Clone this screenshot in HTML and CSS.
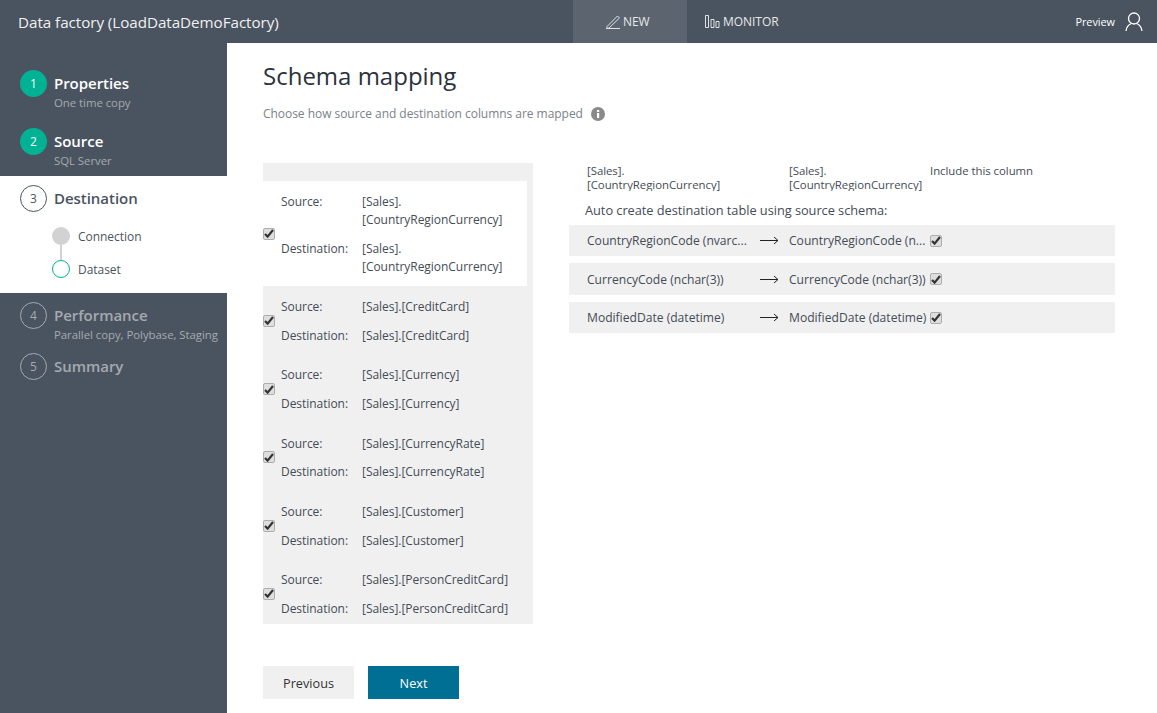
FILE: index.html
```html
<!DOCTYPE html>
<html lang="en">
  <head>
    <meta charset="UTF-8" />
    <title>Schema mapping</title>
    <link rel="stylesheet" href="styles.css">
  </head>
  <body>
    <div class="topbar">
      <div class="factory-name">Data factory (LoadDataDemoFactory)</div>
      <div class="tabs">
        <div class="tab tab-active">
          <svg width="15" height="14" viewBox="0 0 15 14" fill="none" stroke="#dfe2e5"><path d="M1 11.5 L11.5 1 L13.5 3 L3 13 L1 13.5 Z M0 13.5 H14"/></svg>
          NEW
        </div>
        <div class="tab">
          <svg width="15" height="13" viewBox="0 0 15 13" fill="none" stroke="#dfe2e5"><path d="M0.5 0.5 H3.5 V12.5 H0.5 Z M6 4.5 H9 V12.5 H6 Z M11 6.5 H14 V12.5 H11 Z"/></svg>
          MONITOR
        </div>
      </div>
      <div class="user-area">
        <span>Preview</span>
        <svg width="18" height="20" viewBox="0 0 18 20" fill="none" stroke="#fff" stroke-width="1.3"><circle cx="9" cy="6.5" r="5.5"/><path d="M1 19 C1.5 14.5 4 12.5 6.5 11.5 M17 19 C16.5 14.5 14 12.5 11.5 11.5"/></svg>
      </div>
    </div>

    <div class="layout">
      <div class="sidebar">
        <div class="step step-done">
          <div class="step-num">1</div>
          <div>
            <div class="step-title">Properties</div>
            <div class="step-sub">One time copy</div>
          </div>
        </div>
        <div class="step step-done">
          <div class="step-num">2</div>
          <div>
            <div class="step-title">Source</div>
            <div class="step-sub">SQL Server</div>
          </div>
        </div>
        <div class="step step-current">
          <div class="step-head">
            <div class="step-num">3</div>
            <div class="step-title">Destination</div>
          </div>
          <div class="substeps">
            <div class="substep">
              <span class="dot dot-done"></span>
              Connection
            </div>
            <div class="substep">
              <span class="dot dot-now"></span>
              Dataset
            </div>
          </div>
        </div>
        <div class="step step-todo step-short">
          <div class="step-num">4</div>
          <div>
            <div class="step-title">Performance</div>
            <div class="step-sub">Parallel copy, Polybase, Staging</div>
          </div>
        </div>
        <div class="step step-todo">
          <div class="step-num">5</div>
          <div>
            <div class="step-title">Summary</div>
          </div>
        </div>
      </div>

      <div class="main">
        <h1>Schema mapping</h1>
        <div class="subtitle">
          Choose how source and destination columns are mapped
          <svg class="info" width="14" height="14" viewBox="0 0 14 14"><circle cx="7" cy="7" r="7" fill="#8a8a8a"/><rect x="6" y="6" width="2.2" height="5" fill="#fff"/><rect x="6" y="3" width="2.2" height="2" fill="#fff"/></svg>
        </div>

        <div class="columns">
          <div class="table-list">
            <div class="map-row map-row-selected">
              <span class="check"><svg width="10" height="9" viewBox="0 0 10 9"><path d="M1 5 L3.6 7.6 L9 1" fill="none" stroke="#333" stroke-width="2.2"/></svg></span>
              <div class="map-grid">
                <span>Source:</span><span>[Sales].<br>[CountryRegionCurrency]</span>
                <span>Destination:</span><span>[Sales].<br>[CountryRegionCurrency]</span>
              </div>
            </div>
            <div class="map-row">
              <span class="check"><svg width="10" height="9" viewBox="0 0 10 9"><path d="M1 5 L3.6 7.6 L9 1" fill="none" stroke="#333" stroke-width="2.2"/></svg></span>
              <div class="map-grid">
                <span>Source:</span><span>[Sales].[CreditCard]</span>
                <span>Destination:</span><span>[Sales].[CreditCard]</span>
              </div>
            </div>
            <div class="map-row">
              <span class="check"><svg width="10" height="9" viewBox="0 0 10 9"><path d="M1 5 L3.6 7.6 L9 1" fill="none" stroke="#333" stroke-width="2.2"/></svg></span>
              <div class="map-grid">
                <span>Source:</span><span>[Sales].[Currency]</span>
                <span>Destination:</span><span>[Sales].[Currency]</span>
              </div>
            </div>
            <div class="map-row">
              <span class="check"><svg width="10" height="9" viewBox="0 0 10 9"><path d="M1 5 L3.6 7.6 L9 1" fill="none" stroke="#333" stroke-width="2.2"/></svg></span>
              <div class="map-grid">
                <span>Source:</span><span>[Sales].[CurrencyRate]</span>
                <span>Destination:</span><span>[Sales].[CurrencyRate]</span>
              </div>
            </div>
            <div class="map-row">
              <span class="check"><svg width="10" height="9" viewBox="0 0 10 9"><path d="M1 5 L3.6 7.6 L9 1" fill="none" stroke="#333" stroke-width="2.2"/></svg></span>
              <div class="map-grid">
                <span>Source:</span><span>[Sales].[Customer]</span>
                <span>Destination:</span><span>[Sales].[Customer]</span>
              </div>
            </div>
            <div class="map-row">
              <span class="check"><svg width="10" height="9" viewBox="0 0 10 9"><path d="M1 5 L3.6 7.6 L9 1" fill="none" stroke="#333" stroke-width="2.2"/></svg></span>
              <div class="map-grid">
                <span>Source:</span><span>[Sales].[PersonCreditCard]</span>
                <span>Destination:</span><span>[Sales].[PersonCreditCard]</span>
              </div>
            </div>
          </div>

          <div class="detail">
            <div class="detail-head">
              <div class="head-a">[Sales].<br>[CountryRegionCurrency]</div>
              <div class="head-b">[Sales].<br>[CountryRegionCurrency]</div>
              <div>Include this column</div>
            </div>
            <div class="auto-note">Auto create destination table using source schema:</div>
            <div class="col-row">
              <div class="cell-a">CountryRegionCode (nvarc...</div>
              <svg class="arrow" width="19" height="9" viewBox="0 0 19 9" fill="none" stroke="#222"><path d="M0 4.5 H18 M14 1 L18 4.5 L14 8"/></svg>
              <div class="cell-b">CountryRegionCode (n...</div>
              <span class="check"><svg width="10" height="9" viewBox="0 0 10 9"><path d="M1 5 L3.6 7.6 L9 1" fill="none" stroke="#333" stroke-width="2.2"/></svg></span>
            </div>
            <div class="col-row col-row-tall">
              <div class="cell-a">CurrencyCode (nchar(3))</div>
              <svg class="arrow" width="19" height="9" viewBox="0 0 19 9" fill="none" stroke="#222"><path d="M0 4.5 H18 M14 1 L18 4.5 L14 8"/></svg>
              <div class="cell-b">CurrencyCode (nchar(3))</div>
              <span class="check"><svg width="10" height="9" viewBox="0 0 10 9"><path d="M1 5 L3.6 7.6 L9 1" fill="none" stroke="#333" stroke-width="2.2"/></svg></span>
            </div>
            <div class="col-row">
              <div class="cell-a">ModifiedDate (datetime)</div>
              <svg class="arrow" width="19" height="9" viewBox="0 0 19 9" fill="none" stroke="#222"><path d="M0 4.5 H18 M14 1 L18 4.5 L14 8"/></svg>
              <div class="cell-b">ModifiedDate (datetime)</div>
              <span class="check"><svg width="10" height="9" viewBox="0 0 10 9"><path d="M1 5 L3.6 7.6 L9 1" fill="none" stroke="#333" stroke-width="2.2"/></svg></span>
            </div>
          </div>
        </div>

        <div class="actions">
          <button class="btn">Previous</button>
          <button class="btn btn-primary">Next</button>
        </div>
      </div>
    </div>
  </body>
</html>
```

FILE: styles.css
```css
body {
  font-family: "Open Sans", "Noto Sans", sans-serif;
  font-size: 12px;
  letter-spacing: -0.04px;
  color: #444c56;
  background-color: #fff;
  margin: 0;
  height: 713px;
  overflow: hidden;
}

.topbar {
  height: 43px;
  background-color: #4a5460;
  color: #fff;
  display: flex;
  align-items: center;
}

.factory-name {
  width: 573px;
  box-sizing: border-box;
  padding-left: 18px;
  font-size: 15.2px;
  color: #f0f0f0;
}

.tabs {
  display: flex;
  height: 100%;
}

.tab {
  display: flex;
  align-items: center;
  gap: 3px;
  padding: 0 18px;
  font-size: 12px;
  color: #e8e8e8;
}

.tab-active {
  width: 114px;
  box-sizing: border-box;
  padding-left: 33px;
  gap: 2px;
  background-color: #5b646f;
}

.user-area {
  margin-left: auto;
  margin-right: 14px;
  display: flex;
  align-items: center;
  gap: 10px;
  font-size: 10.9px;
}

.layout {
  display: flex;
  height: 670px;
}

.sidebar {
  width: 227px;
  flex: none;
  background-color: #4a5460;
  padding-top: 18px;
  box-sizing: border-box;
}

.step {
  display: flex;
  gap: 7px;
  padding: 9px 0 9.5px 20px;
  color: #fff;
}

.step-short {
  padding-bottom: 3px;
}

.step-num {
  width: 27px;
  height: 27px;
  flex: none;
  box-sizing: border-box;
  border-radius: 50%;
  display: flex;
  align-items: center;
  justify-content: center;
  font-size: 12px;
}

.step-title {
  padding-top: 1px;
  font-size: 15px;
  font-weight: 600;
  line-height: 25px;
  white-space: nowrap;
}

.step-sub {
  font-size: 11.4px;
  line-height: 13px;
  white-space: nowrap;
  color: #a5aaaf;
}

.step-done .step-num {
  background-color: #00b294;
}

.step-todo {
  color: #a5aaaf;
}

.step-todo .step-num {
  border: 1px solid #a5aaaf;
}

.step-current {
  display: block;
  height: 117px;
  box-sizing: border-box;
  background-color: #fff;
  color: #4a5460;
}

.step-current .step-num {
  border: 1px solid #4a5460;
}

.step-head {
  display: flex;
  gap: 7px;
}

.substeps {
  margin: 15px 0 0 32px;
}

.substep {
  display: flex;
  align-items: center;
  gap: 8px;
  height: 18px;
}

.substep:first-child {
  margin-bottom: 15px;
}

.dot {
  position: relative;
  width: 18px;
  height: 18px;
  box-sizing: border-box;
  border-radius: 50%;
}

.dot-done {
  background-color: #d2d2d2;
}

.dot-done::after {
  content: "";
  position: absolute;
  left: 8px;
  top: 18px;
  width: 2px;
  height: 15px;
  background-color: #d2d2d2;
}

.dot-now {
  border: 1px solid #00b294;
}

.main {
  flex: 1;
  padding-left: 36px;
  padding-right: 42px;
}

h1 {
  margin: 0;
  padding-top: 16px;
  font-size: 24px;
  font-weight: 400;
  line-height: 34px;
  letter-spacing: 0;
  color: #2b323b;
}

.subtitle {
  margin-top: 12px;
  height: 18px;
  line-height: 18px;
  color: #7a828b;
  display: flex;
  align-items: center;
  gap: 8px;
}

.columns {
  display: flex;
  gap: 36px;
  margin-top: 40px;
}

.table-list {
  width: 270px;
  flex: none;
  box-sizing: border-box;
  padding-top: 18px;
  background-color: #f0f0f0;
}

.map-row {
  display: flex;
  align-items: center;
  gap: 6px;
  padding: 7px 0 1px;
  margin-bottom: 2.75px;
}

.map-row .check {
  margin-top: -2px;
}

.map-row:last-child {
  margin-bottom: 0;
  padding-bottom: 0;
}

.map-row-selected {
  margin: 0 6px 0 0;
  padding: 12px 0 10px;
  background-color: #fff;
}

.map-row-selected .map-grid {
  row-gap: 11px;
  line-height: 18px;
}

.map-grid {
  display: grid;
  grid-template-columns: 81px auto;
  line-height: 28.75px;
  white-space: nowrap;
}

.check {
  width: 12px;
  height: 12px;
  flex: none;
  box-sizing: border-box;
  border: 1px solid #adadad;
  border-radius: 2px;
  background-color: #dedede;
  display: flex;
  align-items: center;
  justify-content: center;
}

.detail {
  flex: 1;
  padding-top: 1px;
}

.detail-head {
  display: flex;
  height: 27px;
  overflow: hidden;
  padding-left: 18px;
  font-size: 11.4px;
  line-height: 14px;
}

.head-a {
  width: 202px;
  flex: none;
}

.head-b {
  width: 141px;
  flex: none;
}

.auto-note {
  margin: 10px 0 6px 16px;
  font-size: 12.8px;
  line-height: 18px;
}

.col-row {
  display: flex;
  align-items: center;
  height: 31px;
  margin-bottom: 7px;
  padding-left: 18px;
  font-size: 12.1px;
  letter-spacing: 0;
  white-space: nowrap;
  background-color: #f0f0f0;
}

.col-row-tall {
  height: 32px;
}

.cell-a {
  width: 173px;
  flex: none;
}

.cell-b {
  width: 141px;
  flex: none;
}

.arrow {
  flex: none;
  margin-right: 10px;
}

.actions {
  display: flex;
  gap: 14px;
  margin-top: 42px;
}

.btn {
  width: 91px;
  height: 33px;
  padding: 1px 0 0;
  border: none;
  font-family: inherit;
  font-size: 12.7px;
  color: #333;
  background-color: #f0f0f0;
}

.btn-primary {
  background-color: #006f94;
  color: #fff;
}
```
